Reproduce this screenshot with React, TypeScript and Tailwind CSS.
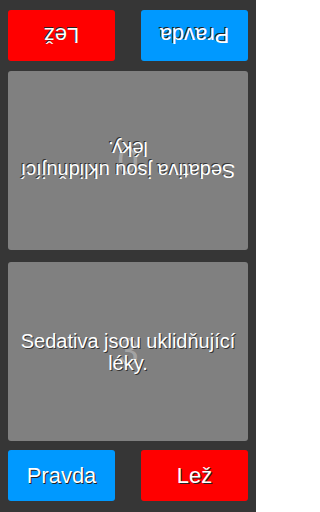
const FONT = "font-['Liberation_Sans',Arial,sans-serif]";

const STATEMENT = "Sedativa jsou uklidňující léky.";

function AnswerButton({ label, color }: { label: string; color: "blue" | "red" }) {
  const bg = color === "blue" ? "bg-[#0099ff]" : "bg-[#ff0000]";
  return (
    <button
      className={`${bg} h-[51px] w-[107px] rounded-[3px] text-[22px] text-white [text-shadow:1px_1px_0_#222]`}
    >
      {label}
    </button>
  );
}

function Card({ score, text }: { score: number; text: string }) {
  return (
    <div className="relative flex flex-1 items-center justify-center rounded-[3px] bg-[#808080] px-3">
      <span className="absolute text-[38px] leading-none text-white/30">{score}</span>
      <p className="relative text-center text-[20px] leading-[22px] text-white [text-shadow:1px_1px_0_#333]">
        {text}
      </p>
    </div>
  );
}

export default function App() {
  return (
    <div className={`${FONT} flex h-[512px] w-[256px] flex-col bg-[#363636] px-2 pt-[10px] pb-[11px]`}>
      <div className="flex rotate-180 justify-between">
        <AnswerButton label="Pravda" color="blue" />
        <AnswerButton label="Lež" color="red" />
      </div>
      <div className="mt-[10px] flex flex-1 flex-col gap-3">
        <div className="flex flex-1 rotate-180">
          <Card score={0} text={STATEMENT} />
        </div>
        <div className="flex flex-1">
          <Card score={3} text={STATEMENT} />
        </div>
      </div>
      <div className="mt-[9px] flex justify-between">
        <AnswerButton label="Pravda" color="blue" />
        <AnswerButton label="Lež" color="red" />
      </div>
    </div>
  );
}
